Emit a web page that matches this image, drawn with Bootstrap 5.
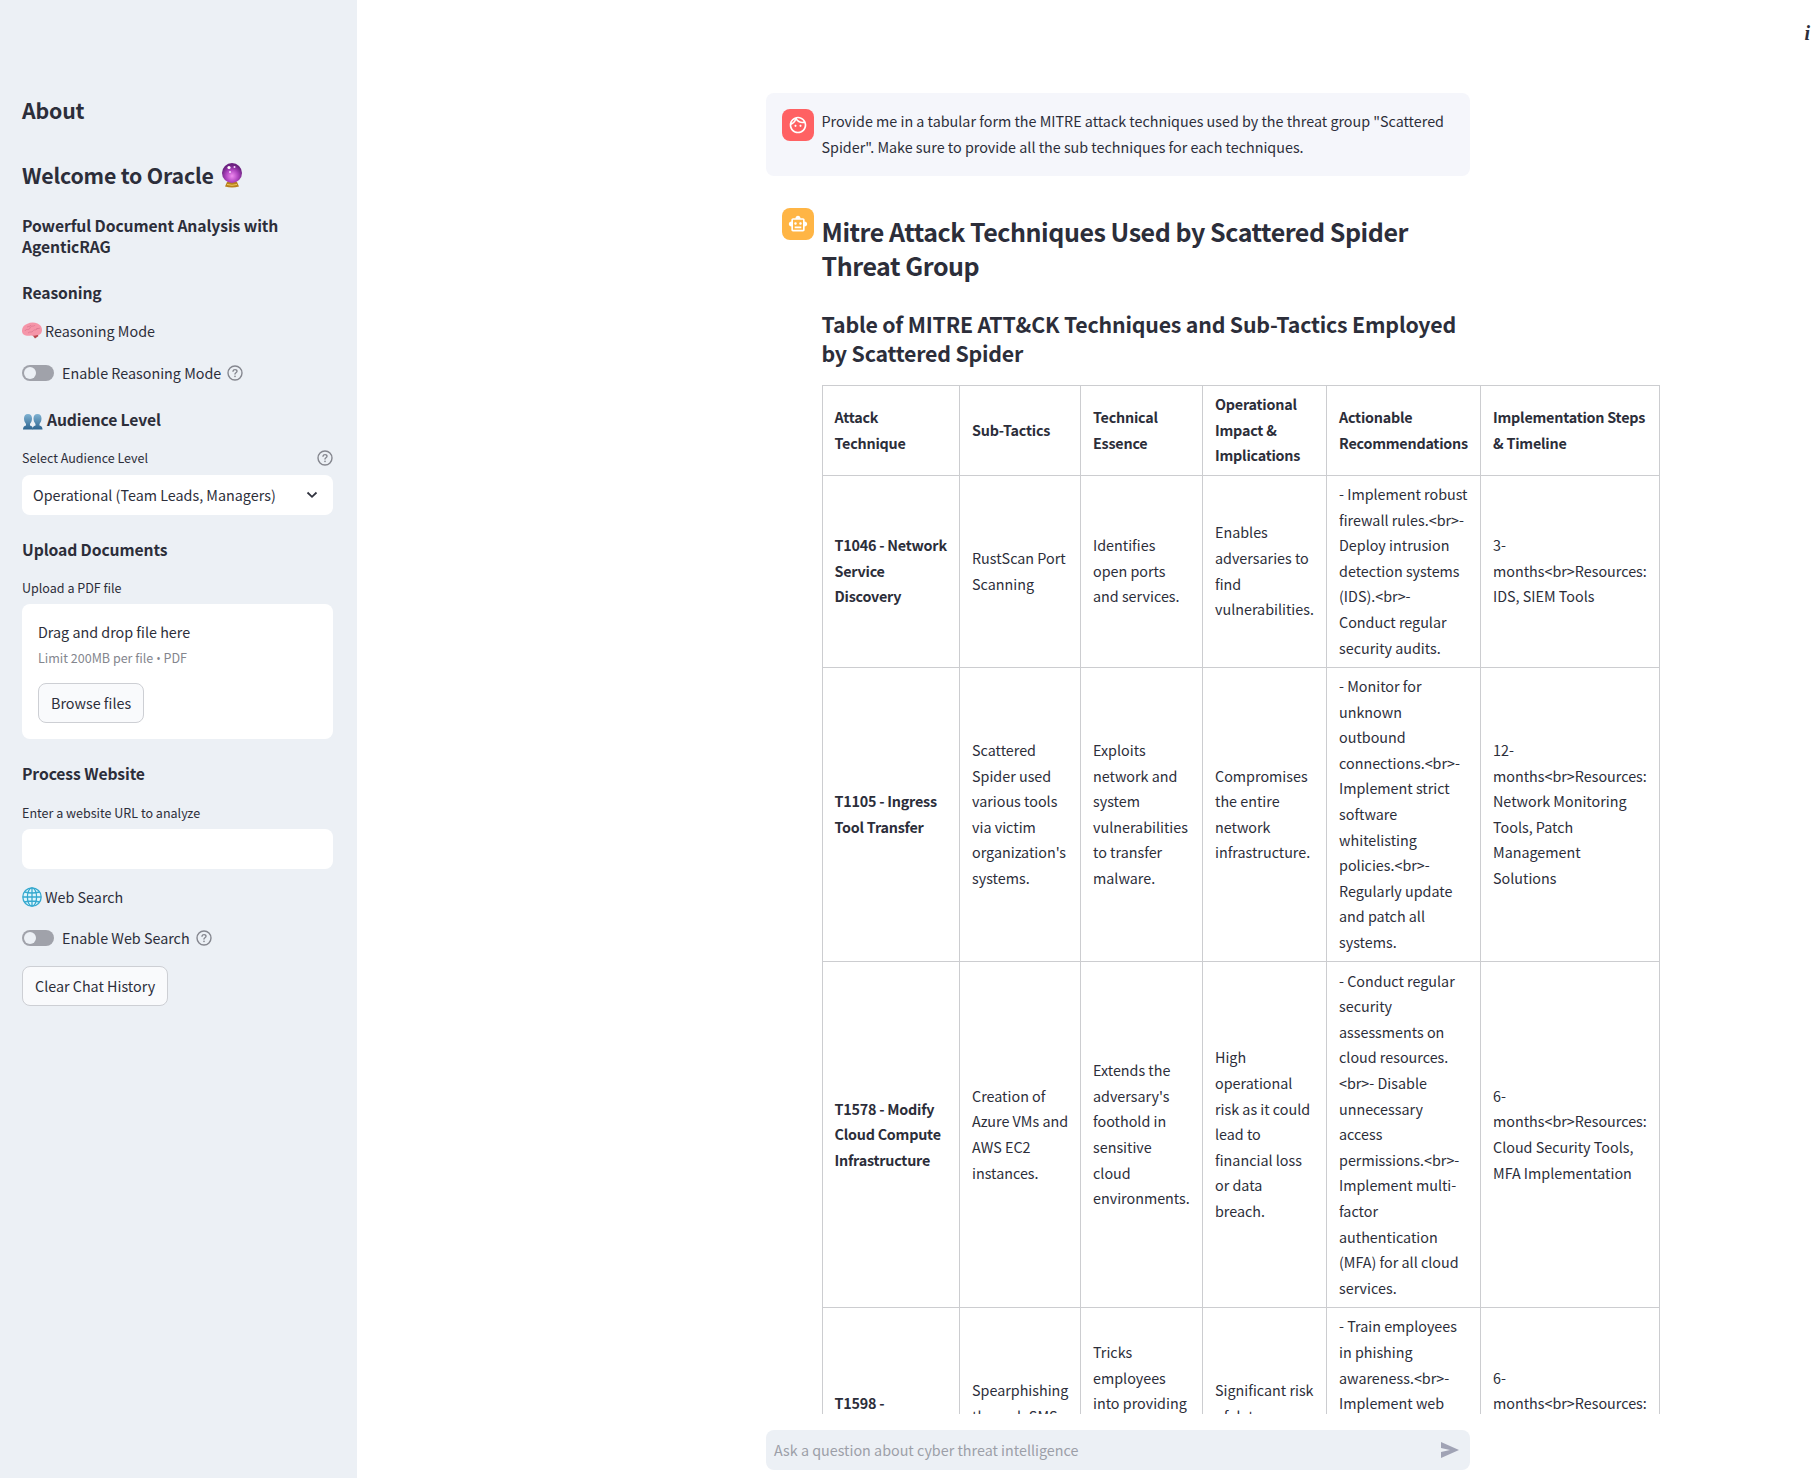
<!DOCTYPE html>
<html lang="en">
<head>
<meta charset="utf-8">
<title>Oracle</title>
<link href="https://cdn.jsdelivr.net/npm/bootstrap@5.3.0/dist/css/bootstrap.min.css" rel="stylesheet">
<style>
html,body{height:100%}
body{font-family:"Noto Sans CJK SC","Noto Sans CJK JP","Open Sans",sans-serif;font-size:14.33px;line-height:25.6px;color:#2c2e3a;overflow:hidden;background:#fff}
h1,h2,h3,p{margin:0;color:#2c2e3a}
h1,h2,h3,th,.strong-cell{font-weight:700}
th,.strong-cell{letter-spacing:-.22px}
.side{width:357px;padding:96px 24px 0 22px;background:#ecf0f5}
.side h2,.reply h2{font-size:21.3px;line-height:28.8px;letter-spacing:-.19px}
.side h3{font-size:15.7px;line-height:21.1px;letter-spacing:-.1px}
.reply h1{font-size:25px;line-height:33.6px;padding-top:7px;letter-spacing:-.45px;margin-left:-.5px}
.reply h2{margin-left:-.5px}
.cap{font-size:12.54px;line-height:20px}
.gray{color:#84868e}
.dot{font-family:"Open Sans",sans-serif;font-size:12px}
.toggle{width:32px;height:16px;border-radius:8px;background:#a0a2aa;padding:2px}
.toggle i{display:block;width:12px;height:12px;border-radius:50%;background:#ecf0f5}
.field{height:40px;border-radius:8px;background:#fff;padding:0 11px}
.drop{height:135px;border-radius:8px;background:#fff;padding:15px 16px}
.btn-lite{font-size:14.33px;line-height:25.6px;height:40px;padding:0 12px;border:1px solid #cdcfd4;border-radius:8px;background:#f9fafc;color:#2c2e3a;white-space:nowrap}
.feed{height:1414px;overflow:hidden;padding:93px 0 0 409px}
.column{width:704px}
.msg{padding:16px;gap:8px}
.msg-user{background:#f5f6fb;border-radius:8px;height:83px}
.msg-user p{margin:-1px 0 0 -.5px}
.avatar{width:32px;height:32px;border-radius:8px}
.red{background:#ff6163}
.amber{background:#ffb545}
.grid{border-collapse:collapse;table-layout:fixed;width:838px;margin-top:17px;white-space:nowrap}
.grid td,.grid th{border:1px solid #cccdd0;padding:5.4px 0 6.600px 12px;vertical-align:middle}
.grid tr>:first-child{padding-left:11.5px}
.ask{margin:16px 0 0 409px;width:704px;height:40px;border-radius:8px;background:#ecf0f5;padding:0 10px 0 8px;color:#9c9fa8}
.info{right:3px;top:16px;font:italic bold 20px/35px "Liberation Serif",serif}
</style>
<script src="https://cdn.jsdelivr.net/npm/bootstrap@5.3.0/dist/js/bootstrap.bundle.min.js"></script>
</head>
<body>
<svg class="d-none">
 <symbol id="help" viewBox="0 0 16 16"><g fill="none" stroke="#85878f" stroke-width="1.4" stroke-linecap="round"><circle cx="8" cy="8" r="7"/><path d="M6 6.200c.2-1.100 1-1.600 2-1.600 1.200 0 2 .7 2 1.700 0 1.400-2 1.500-2 2.700"/></g><circle cx="8" cy="11.400" r=".8" fill="#85878f"/></symbol>
</svg>
<div class="d-flex h-100">
<aside class="side flex-shrink-0">
 <h2>About</h2>
 <h2 class="d-flex align-items-center" style="margin-top:36px">Welcome to Oracle
  <svg width="22" height="26" viewBox="0 0 22 26" style="margin-left:7px"><defs><radialGradient id="orb" cx=".5" cy=".65" r=".55"><stop offset="0" stop-color="#f08bf0"/><stop offset=".55" stop-color="#b045c0"/><stop offset="1" stop-color="#6b2180"/></radialGradient></defs><path d="M6 20h10l2 4.500q-7 1.800-14 0z" fill="#b8801f"/><path d="M6 22.500q5 1.500 10 0" stroke="#f1cc5c" fill="none"/><circle cx="11" cy="11" r="10" fill="url(#orb)"/><circle cx="8" cy="5.500" r="1.600" fill="#fff"/><circle cx="13.500" cy="5" r="1" fill="#f9d9ff"/><circle cx="9" cy="10" r="1" fill="#f9d9ff"/></svg></h2>
 <h3 style="margin-top:25.4px">Powerful Document Analysis with<br>AgenticRAG</h3>
 <h3 style="margin-top:24.6px">Reasoning</h3>
 <p class="d-flex align-items-center" style="margin-top:15px"><svg width="20" height="18" viewBox="0 0 20 18" style="margin-right:3px"><path d="M10 12.500l5-1 1.500 2.500-3.500 2.500z" fill="#b8444a"/><path d="M0 9.500C-.3 5.500 2 2.800 5.500 1.700c3-1.600 7-1.500 10-.2 3 1.300 4.500 3.500 4.500 6.500 0 3-2 5-4.500 5-2 1-4.500.8-6.500.5C5 14.500.500 13.500 0 9.500z" fill="#f595a8"/><path d="M3 9c1-3 4 0 5-3s4-1 5-3m-7 8c2-2 4 0 5-2s3 0 5-3M5 5c2-1 3 0 4-2m5 4c1-1 3 0 4-1" fill="none" stroke="#dc7890" stroke-width=".8"/></svg>Reasoning Mode</p>
 <div class="d-flex align-items-center" style="margin-top:17px"><span class="toggle"><i></i></span><span style="margin-left:8px">Enable Reasoning Mode</span><svg width="16" height="16" style="margin-left:6px"><use href="#help"/></svg></div>
 <h3 class="d-flex align-items-center" style="margin-top:23px"><svg width="20" height="16" viewBox="0 0 20 16" style="margin:4px 4px 0 1px"><defs><linearGradient id="bust" x2="0" y2="1"><stop stop-color="#7fb2d2"/><stop offset="1" stop-color="#2d648f"/></linearGradient></defs><g fill="url(#bust)"><path id="person" d="M5 0c2.800 0 4 2 4 4.500S8 8.500 7 10v1.500c2 .6 3 1.500 3 4H0c0-2.500 1-3.400 3-4V10C2 8.500 1 7 1 4.500S2.200 0 5 0z"/><use href="#person" x="9.500"/></g></svg>Audience Level</h3>
 <div class="cap d-flex align-items-center justify-content-between" style="margin-top:18px"><span>Select Audience Level</span><svg width="16" height="16"><use href="#help"/></svg></div>
 <div class="field d-flex align-items-center justify-content-between" style="margin-top:7px"><span>Operational (Team Leads, Managers)</span><svg width="12" height="8" viewBox="0 0 12 8" style="margin-right:4px"><path d="M1.500 1.500L6 5.800l4.500-4.300" fill="none" stroke="#31333f" stroke-width="1.800"/></svg></div>
 <h3 style="margin-top:24px">Upload Documents</h3>
 <div class="cap" style="margin-top:18px">Upload a PDF file</div>
 <div class="drop" style="margin-top:6px"><div>Drag and drop file here</div><div class="cap gray" style="margin-top:3px">Limit 200MB per file <span class="dot">•</span> PDF</div><button class="btn btn-lite" style="margin-top:14px;width:106px">Browse files</button></div>
 <h3 style="margin-top:24px">Process Website</h3>
 <div class="cap" style="margin-top:19px">Enter a website URL to analyze</div>
 <div class="field" style="margin-top:6px"></div>
 <p class="d-flex align-items-center" style="margin-top:15px"><svg width="20" height="20" viewBox="0 0 20 20" style="margin-right:3px"><circle cx="10" cy="10" r="9.300" fill="#dff6fc"/><g fill="none" stroke="#36a9cf" stroke-width="1.300"><circle cx="10" cy="10" r="9.200"/><ellipse cx="10" cy="10" rx="4.600" ry="9.200"/><path d="M10 1v18M1 10h18M2.500 5q7.500 2 15 0M2.500 15q7.500-2 15 0"/></g></svg>Web Search</p>
 <div class="d-flex align-items-center" style="margin-top:15px"><span class="toggle"><i></i></span><span style="margin-left:8px">Enable Web Search</span><svg width="16" height="16" style="margin-left:6px"><use href="#help"/></svg></div>
 <button class="btn btn-lite" style="margin-top:15px;width:146px">Clear Chat History</button>
</aside>
<main class="flex-grow-1 position-relative">
 <span class="position-absolute info">i</span>
 <div class="feed">
  <div class="column">
   <div class="msg msg-user d-flex">
    <div class="avatar red flex-shrink-0 d-flex align-items-center justify-content-center"><svg width="20" height="20" viewBox="0 0 24 24" fill="#fff"><path d="M10.250 13c0 .690-.560 1.250-1.250 1.250S7.750 13.690 7.750 13s.560-1.250 1.250-1.250 1.250.560 1.250 1.250zM15 11.750c-.690 0-1.250.560-1.250 1.250s.560 1.250 1.250 1.250 1.250-.560 1.250-1.250-.560-1.250-1.250-1.250zm7 .250c0 5.520-4.480 10-10 10S2 17.520 2 12 6.480 2 12 2s10 4.480 10 10zM10.660 4.120C12.060 6.440 14.600 8 17.500 8c.460 0 .910-.050 1.340-.120C17.440 5.560 14.900 4 12 4c-.460 0-.910.050-1.340.120zM4.420 9.470c1.710-.970 3.030-2.550 3.660-4.440C6.370 6 5.050 7.580 4.420 9.470zM20 12c0-.780-.120-1.530-.330-2.240-.700.150-1.420.240-2.170.240-3.130 0-5.920-1.440-7.760-3.690C8.690 8.870 6.600 10.880 4 11.860c.010.040 0 .090 0 .140 0 4.410 3.590 8 8 8s8-3.590 8-8z"/></svg></div>
    <p class="text-nowrap">Provide me in a tabular form the MITRE attack techniques used by the threat group "Scattered<br>Spider". Make sure to provide all the sub techniques for each techniques.</p>
   </div>
   <div class="msg d-flex" style="margin-top:16px">
    <div class="avatar amber flex-shrink-0 d-flex align-items-center justify-content-center"><svg width="20" height="20" viewBox="0 0 24 24" fill="#fff"><path d="M20 9V7c0-1.100-.900-2-2-2h-3c0-1.660-1.340-3-3-3S9 3.340 9 5H6c-1.100 0-2 .900-2 2v2c-1.660 0-3 1.340-3 3s1.340 3 3 3v4c0 1.100.900 2 2 2h12c1.100 0 2-.900 2-2v-4c1.660 0 3-1.340 3-3s-1.340-3-3-3zm-2 10H6V7h12v12zm-9-6c-.830 0-1.500-.670-1.500-1.500S8.170 10 9 10s1.500.670 1.500 1.500S9.830 13 9 13zm7.500-1.500c0 .830-.670 1.500-1.500 1.500s-1.500-.670-1.500-1.500.670-1.500 1.500-1.500 1.500.670 1.500 1.500zM8 15h8v2H8v-2z"/></svg></div>
    <div class="reply text-nowrap">
     <h1>Mitre Attack Techniques Used by Scattered Spider<br>Threat Group</h1>
     <h2 style="margin-top:28px">Table of MITRE ATT&amp;CK Techniques and Sub-Tactics Employed<br>by Scattered Spider</h2>
     <table class="grid">
      <colgroup><col style="width:137px"><col style="width:121px"><col style="width:122px"><col style="width:124px"><col style="width:154px"><col style="width:179px"></colgroup>
      <thead><tr><th>Attack<br>Technique</th><th>Sub-Tactics</th><th>Technical<br>Essence</th><th>Operational<br>Impact &amp;<br>Implications</th><th>Actionable<br>Recommendations</th><th>Implementation Steps<br>&amp; Timeline</th></tr></thead>
      <tbody>
      <tr><td class="strong-cell">T1046 - Network<br>Service<br>Discovery</td><td>RustScan Port<br>Scanning</td><td>Identifies<br>open ports<br>and services.</td><td>Enables<br>adversaries to<br>find<br>vulnerabilities.</td><td>- Implement robust<br>firewall rules.&lt;br&gt;-<br>Deploy intrusion<br>detection systems<br>(IDS).&lt;br&gt;-<br>Conduct regular<br>security audits.</td><td>3-<br>months&lt;br&gt;Resources:<br>IDS, SIEM Tools</td></tr>
      <tr><td class="strong-cell">T1105 - Ingress<br>Tool Transfer</td><td>Scattered<br>Spider used<br>various tools<br>via victim<br>organization's<br>systems.</td><td>Exploits<br>network and<br>system<br>vulnerabilities<br>to transfer<br>malware.</td><td>Compromises<br>the entire<br>network<br>infrastructure.</td><td>- Monitor for<br>unknown<br>outbound<br>connections.&lt;br&gt;-<br>Implement strict<br>software<br>whitelisting<br>policies.&lt;br&gt;-<br>Regularly update<br>and patch all<br>systems.</td><td>12-<br>months&lt;br&gt;Resources:<br>Network Monitoring<br>Tools, Patch<br>Management<br>Solutions</td></tr>
      <tr><td class="strong-cell">T1578 - Modify<br>Cloud Compute<br>Infrastructure</td><td>Creation of<br>Azure VMs and<br>AWS EC2<br>instances.</td><td>Extends the<br>adversary's<br>foothold in<br>sensitive<br>cloud<br>environments.</td><td>High<br>operational<br>risk as it could<br>lead to<br>financial loss<br>or data<br>breach.</td><td>- Conduct regular<br>security<br>assessments on<br>cloud resources.<br>&lt;br&gt;- Disable<br>unnecessary<br>access<br>permissions.&lt;br&gt;-<br>Implement multi-<br>factor<br>authentication<br>(MFA) for all cloud<br>services.</td><td>6-<br>months&lt;br&gt;Resources:<br>Cloud Security Tools,<br>MFA Implementation</td></tr>
      <tr style="height:218px"><td class="strong-cell">T1598 -<br>&nbsp;</td><td>Spearphishing<br>through SMS<br>&nbsp;</td><td>Tricks<br>employees<br>into providing<br>&nbsp;<br>&nbsp;<br>&nbsp;</td><td>Significant risk<br>of data<br>&nbsp;</td><td>- Train employees<br>in phishing<br>awareness.&lt;br&gt;-<br>Implement web<br>&nbsp;<br>&nbsp;<br>&nbsp;<br>&nbsp;</td><td>6-<br>months&lt;br&gt;Resources:<br>&nbsp;<br>&nbsp;</td></tr>
      </tbody>
     </table>
    </div>
   </div>
  </div>
 </div>
 <div class="ask d-flex align-items-center justify-content-between"><span>Ask a question about cyber threat intelligence</span><svg width="20" height="18" viewBox="0 0 20 18"><path d="M1 1l18 8-18 8v-6l9-2-9-2z" fill="#a0a3b5"/></svg></div>
</main>
</div>
</body>
</html>
